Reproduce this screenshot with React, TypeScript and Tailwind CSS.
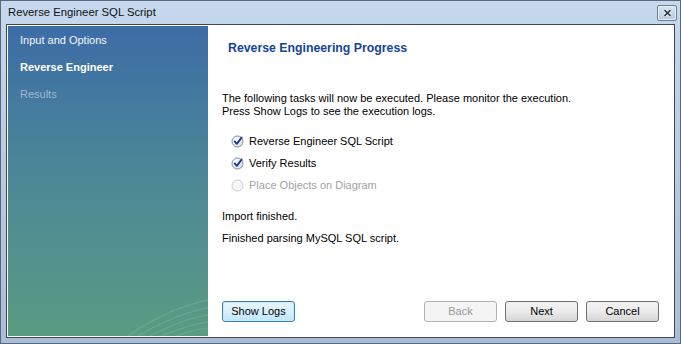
import { useState } from 'react'

const font = { fontFamily: '"Liberation Sans", Arial, sans-serif' }

const steps = [
  { label: 'Input and Options', state: 'done' },
  { label: 'Reverse Engineer', state: 'active' },
  { label: 'Results', state: 'todo' },
]

const tasks = [
  { label: 'Reverse Engineer SQL Script', done: true },
  { label: 'Verify Results', done: true },
  { label: 'Place Objects on Diagram', done: false },
]

function TaskIcon({ done }: { done: boolean }) {
  if (!done) {
    return (
      <svg width="13" height="13" viewBox="0 0 13 13">
        <circle cx="6.5" cy="6.5" r="5.5" fill="#f7f7f7" stroke="#c6c9cc" />
      </svg>
    )
  }
  return (
    <svg width="13" height="13" viewBox="0 0 13 13">
      <defs>
        <linearGradient id="tk" x1="0" y1="0" x2="1" y2="1">
          <stop offset="0" stopColor="#ffffff" />
          <stop offset="1" stopColor="#d8dde3" />
        </linearGradient>
      </defs>
      <circle cx="6.5" cy="6.5" r="5.5" fill="url(#tk)" stroke="#7f8a96" />
      <path d="M3.6 6.4 L5.8 8.8 L10.6 2.6" fill="none" stroke="#1d3f8f" strokeWidth="1.9" strokeLinecap="round" strokeLinejoin="round" />
    </svg>
  )
}

function Button({ children, kind = 'normal' }: { children: string; kind?: 'normal' | 'focus' | 'disabled' }) {
  const look = {
    normal: 'border-[#707070] bg-gradient-to-b from-[#f2f2f2] via-[#ebebeb] to-[#d6d6d6] text-black',
    focus: 'border-[#3c7fb1] bg-gradient-to-b from-[#eaf6fd] via-[#d9f0fc] to-[#bee6fd] text-black shadow-[inset_0_0_0_1px_#c8e8fb]',
    disabled: 'border-[#adb2b5] bg-[#f4f4f4] text-[#9a9a9a]',
  }[kind]
  return (
    <button className={`flex h-[21px] w-[73px] items-center justify-center rounded-[3px] border text-[11px] ${look}`}>
      {children}
    </button>
  )
}

export default function App() {
  const [logs] = useState(false)

  return (
    <div style={font} className="flex h-[344px] w-[681px] flex-col border border-[#58677a] bg-gradient-to-b from-[#c5d8ee] to-[#a9bdd7]">
      {/* Title bar */}
      <div className="flex h-[23px] items-center justify-between pl-[7px] pr-[3px]">
        <span className="text-[11.3px] text-[#111]">Reverse Engineer SQL Script</span>
        <div className="flex h-[16px] w-[20px] items-center justify-center rounded-[2px] border border-[#6e7d90] bg-gradient-to-b from-[#d6e3f2] to-[#b8cbe3] shadow-[inset_0_0_0_1px_#e7eef8]">
          <svg width="9" height="8" viewBox="0 0 9 8">
            <path d="M1.5 1.2 L7.5 6.8 M7.5 1.2 L1.5 6.8" stroke="#ffffff" strokeWidth="3.2" />
            <path d="M1.5 1.2 L7.5 6.8 M7.5 1.2 L1.5 6.8" stroke="#2b3644" strokeWidth="1.6" />
          </svg>
        </div>
      </div>

      {/* Client area */}
      <div className="mx-[5px] mb-[5px] flex-1 border border-[#3f4953]">
        <div className="flex h-full border border-white">
          {/* Step sidebar */}
          <div className="relative w-[200px] overflow-hidden bg-gradient-to-b from-[#3d6ca6] via-[#4c8896] to-[#5a9b82]">
            <svg className="pointer-events-none absolute bottom-0 right-0" width="80" height="56" viewBox="0 0 80 56">
              <path d="M0 56 C26 38 52 26 80 20" fill="none" stroke="#8fc79a" strokeOpacity="0.3" strokeWidth="1.4" />
              <path d="M10 56 C34 42 56 32 80 28" fill="none" stroke="#9fd3a8" strokeOpacity="0.28" strokeWidth="1.2" />
              <path d="M22 56 C42 46 60 38 80 35" fill="none" stroke="#9fd3a8" strokeOpacity="0.26" strokeWidth="1" />
              <path d="M34 56 C50 49 66 44 80 42" fill="none" stroke="#a8dab0" strokeOpacity="0.26" strokeWidth="1" />
              <path d="M48 56 C58 52 70 49 80 48" fill="none" stroke="#a8dab0" strokeOpacity="0.22" strokeWidth="1" />
            </svg>
            <ul className="flex flex-col gap-[14px] pl-[12px] pt-[8px]">
              {steps.map((s) => (
                <li
                  key={s.label}
                  className={`text-[11px] leading-[13px] ${
                    s.state === 'active' ? 'font-bold text-white' : s.state === 'done' ? 'text-[#f2f6fa]' : 'text-[#9fb8cb]'
                  }`}
                >
                  {s.label}
                </li>
              ))}
            </ul>
          </div>

          {/* Page */}
          <div className="flex flex-1 flex-col bg-white pb-[14px] pl-[14px] pr-[14px] text-[11px] text-black">
            <h2 className="ml-[6px] mt-[14px] text-[12.3px] font-bold leading-[16px] text-[#16449a]">
              Reverse Engineering Progress
            </h2>
            <p className="mt-[36px] leading-[13px]">
              The following tasks will now be executed. Please monitor the execution.
              <br />
              Press Show Logs to see the execution logs.
            </p>
            <div className="mt-[12px] flex flex-col pl-[9px]">
              {tasks.map((t) => (
                <div key={t.label} className="flex h-[22px] items-center gap-[5px]">
                  <TaskIcon done={t.done} />
                  <span className={t.done ? 'text-black' : 'text-[#a3a3a3]'}>{t.label}</span>
                </div>
              ))}
            </div>
            <div className="mt-[9px] flex h-[22px] items-center">Import finished.</div>
            <div className="flex h-[22px] items-center">Finished parsing MySQL SQL script.</div>

            <div className="mt-auto flex items-center">
              <Button kind={logs ? 'normal' : 'focus'}>Show Logs</Button>
              <div className="ml-auto flex gap-[8px]">
                <Button kind="disabled">Back</Button>
                <Button>Next</Button>
                <Button>Cancel</Button>
              </div>
            </div>
          </div>
        </div>
      </div>
    </div>
  )
}
